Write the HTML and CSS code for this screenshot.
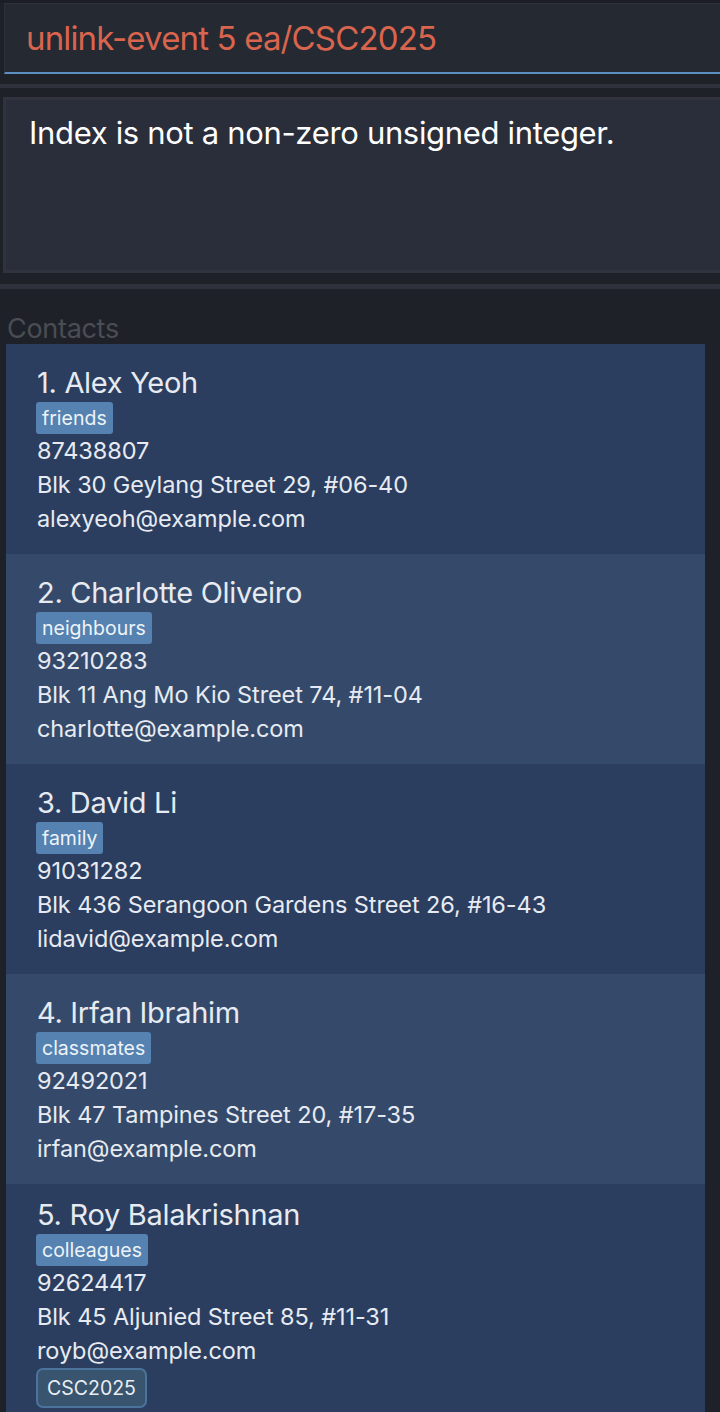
FILE: index.html
```html
<!DOCTYPE html>
<html>
<head>
<meta charset="utf-8">
<link rel="stylesheet" href="styles.css">
</head>
<body>
<div class="app">
  <div class="cmd-pane">
    <div class="cmd-box">unlink-event 5 ea/CSC2025</div>
  </div>
  <div class="divider"></div>
  <div class="result-pane">
    <div class="result-box">Index is not a non-zero unsigned integer.</div>
  </div>
  <div class="divider divider-low"></div>
  <div class="list-pane">
    <div class="list-label">Contacts</div>
    <div class="list">
      <div class="card odd">
        <div class="name">1. Alex Yeoh</div>
        <div class="tags"><span class="tag">friends</span></div>
        <div class="field">87438807</div>
        <div class="field">Blk 30 Geylang Street 29, #06-40</div>
        <div class="field">alexyeoh@example.com</div>
      </div>
      <div class="card even">
        <div class="name">2. Charlotte Oliveiro</div>
        <div class="tags"><span class="tag">neighbours</span></div>
        <div class="field">93210283</div>
        <div class="field">Blk 11 Ang Mo Kio Street 74, #11-04</div>
        <div class="field">charlotte@example.com</div>
      </div>
      <div class="card odd">
        <div class="name">3. David Li</div>
        <div class="tags"><span class="tag">family</span></div>
        <div class="field">91031282</div>
        <div class="field">Blk 436 Serangoon Gardens Street 26, #16-43</div>
        <div class="field">lidavid@example.com</div>
      </div>
      <div class="card even">
        <div class="name">4. Irfan Ibrahim</div>
        <div class="tags"><span class="tag">classmates</span></div>
        <div class="field">92492021</div>
        <div class="field">Blk 47 Tampines Street 20, #17-35</div>
        <div class="field">irfan@example.com</div>
      </div>
      <div class="card odd">
        <div class="name">5. Roy Balakrishnan</div>
        <div class="tags"><span class="tag">colleagues</span></div>
        <div class="field">92624417</div>
        <div class="field">Blk 45 Aljunied Street 85, #11-31</div>
        <div class="field">royb@example.com</div>
        <div class="events"><span class="event">CSC2025</span></div>
      </div>
    </div>
  </div>
</div>
</body>
</html>
```

FILE: styles.css
```css
html, body {
  margin: 0;
  padding: 0;
}
body {
  background: #1f2129;
  font-family: Inter, "Open Sans", "Liberation Sans", sans-serif;
  width: 720px;
  height: 1412px;
  overflow: hidden;
}
.app {
  display: flex;
  flex-direction: column;
}
.cmd-pane {
  padding: 3px 0 0 4px;
  background: linear-gradient(#1c1e25 0, #1c1e25 3px, transparent 3px);
}
.cmd-box {
  height: 71px;
  box-sizing: border-box;
  background: #252932;
  border-top: 1px solid #2d3039;
  border-left: 1px solid #2d3039;
  border-bottom: 2px solid #5b8fc2;
  color: #d9654e;
  font-size: 33px;
  line-height: 40px;
  padding: 14px 0 0 21px;
  letter-spacing: -0.85px;
  margin-right: -10px;
}
.divider {
  margin-top: 10px;
  height: 4px;
  background: #2f323b;
}
.divider-low {
  margin-top: 11px;
  height: 5px;
}
.result-pane {
  padding: 9px 0 0 3px;
}
.result-box {
  height: 176px;
  box-sizing: border-box;
  background: #2a2e3a;
  border: 3px solid #30333d;
  border-right: none;
  color: #ffffff;
  font-size: 31px;
  line-height: 38px;
  padding: 14px 0 0 23px;
  letter-spacing: -0.33px;
  margin-right: -10px;
}
.list-pane {
  padding: 24px 0 0 6px;
}
.list-label {
  color: #4a4d53;
  font-size: 27px;
  line-height: 31px;
  height: 31px;
  padding-left: 1px;
  letter-spacing: -0.3px;
}
.list {
  width: 699px;
  display: flex;
  flex-direction: column;
}
.card {
  min-height: 210px;
  box-sizing: border-box;
  padding: 15px 0 10px 31px;
  display: flex;
  flex-direction: column;
  justify-content: center;
  color: #e7ebf1;
}
.card.odd {
  background: #2b3e5f;
}
.card.even {
  background: #354a6a;
}
.name {
  font-size: 29px;
  line-height: 32px;
  height: 32px;
  letter-spacing: -0.3px;
}
.tags {
  display: flex;
  gap: 6px;
  margin-top: 3px;
  height: 32px;
}
.tag {
  display: inline-block;
  background: #5582b0;
  color: #eef3f8;
  font-size: 19.5px;
  line-height: 32px;
  height: 32px;
  padding: 0 6px;
  border-radius: 3px;
  margin-left: -1px;
}
.field {
  font-size: 23.5px;
  line-height: 34px;
  height: 34px;
  letter-spacing: -0.1px;
}
.events {
  display: flex;
}
.event {
  display: inline-block;
  box-sizing: border-box;
  height: 40px;
  line-height: 36px;
  padding: 0 9px;
  margin-left: -1px;
  font-size: 19.5px;
  color: #e9edf3;
  background: #38546f;
  border: 2px solid #4b739b;
  border-radius: 7px;
}
```
